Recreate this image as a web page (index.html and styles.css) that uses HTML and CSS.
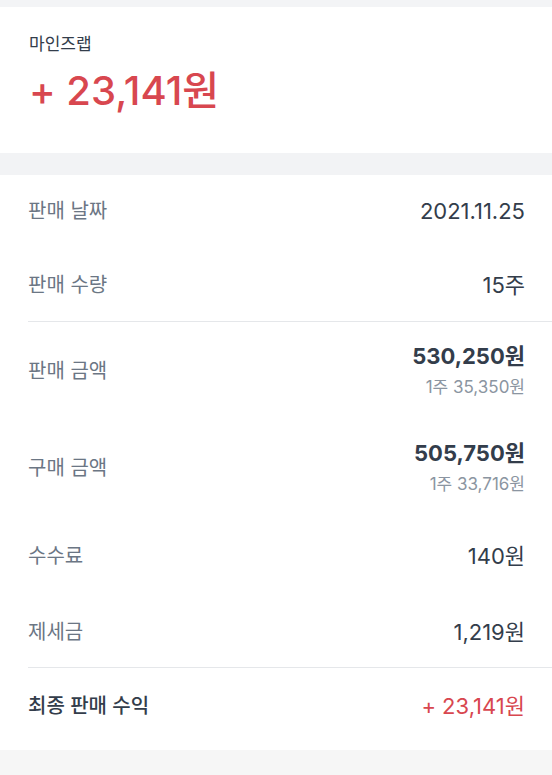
FILE: index.html
```html
<!DOCTYPE html>
<html lang="ko">
<head>
<meta charset="utf-8">
<link rel="stylesheet" href="styles.css">
</head>
<body>
<div class="page">
  <div class="strip"></div>
  <section class="summary">
    <div class="company">마인즈랩</div>
    <div class="profit">+ 23,141원</div>
  </section>
  <div class="band"></div>
  <section class="details">
    <div class="group">
      <div class="row"><span class="label">판매 날짜</span><span class="value">2021.11.25</span></div>
      <div class="row"><span class="label">판매 수량</span><span class="value">15주</span></div>
    </div>
    <div class="divider"></div>
    <div class="group amounts">
      <div class="row">
        <span class="label">판매 금액</span>
        <div class="amount"><span class="value strong">530,250원</span><span class="sub">1주 35,350원</span></div>
      </div>
      <div class="row">
        <span class="label">구매 금액</span>
        <div class="amount"><span class="value strong">505,750원</span><span class="sub">1주 33,716원</span></div>
      </div>
      <div class="row fee"><span class="label">수수료</span><span class="value">140원</span></div>
      <div class="row"><span class="label">제세금</span><span class="value">1,219원</span></div>
    </div>
    <div class="divider"></div>
    <div class="group final">
      <div class="row"><span class="label total">최종 판매 수익</span><span class="value red">+ 23,141원</span></div>
    </div>
  </section>
  <div class="footer-band"></div>
</div>
</body>
</html>
```

FILE: styles.css
```css
* { box-sizing: border-box; }
html, body { margin: 0; padding: 0; background: #ffffff; }
body {
  font-family: "Inter", "Noto Sans CJK KR", sans-serif;
  -webkit-font-smoothing: antialiased;
}
.page { width: 552px; height: 775px; overflow: hidden; display: flex; flex-direction: column; }
.strip { height: 7px; background: #f3f4f6; }
.summary { height: 146px; padding: 25px 28px 0 29px; }
.company { font-size: 17px; line-height: 24px; color: #333d4b; }
.profit {
  margin-top: 11px;
  font-size: 40px;
  line-height: 48px;
  font-weight: 500;
  color: #d8474f;
}
.band { height: 22px; background: #f2f3f5; }
.details { display: flex; flex-direction: column; }
.group { display: flex; flex-direction: column; gap: 38px; padding: 18px 27px 18px 28px; }
.group.amounts { gap: 40px; padding-top: 20px; padding-bottom: 17px; }
.group.amounts .row.fee { margin-top: 2px; }
.group.final { padding-top: 20px; padding-bottom: 26px; }
.divider { height: 1px; background: #e5e7ea; margin-left: 28px; }
.row { display: flex; justify-content: space-between; align-items: center; min-height: 36px; }
.label { font-size: 20px; line-height: 28px; color: #6b7684; }
.label.total { color: #333d4b; font-weight: 500; }
.value { font-size: 22px; line-height: 28px; color: #333d4b; }
.value.strong { font-weight: 700; }
.value.red { color: #d8474f; }
.amount { display: flex; flex-direction: column; align-items: flex-end; }
.sub { margin-top: 5px; font-size: 17px; line-height: 24px; color: #8b95a1; }
.footer-band { flex: 1; background: #f6f6f6; }
```
